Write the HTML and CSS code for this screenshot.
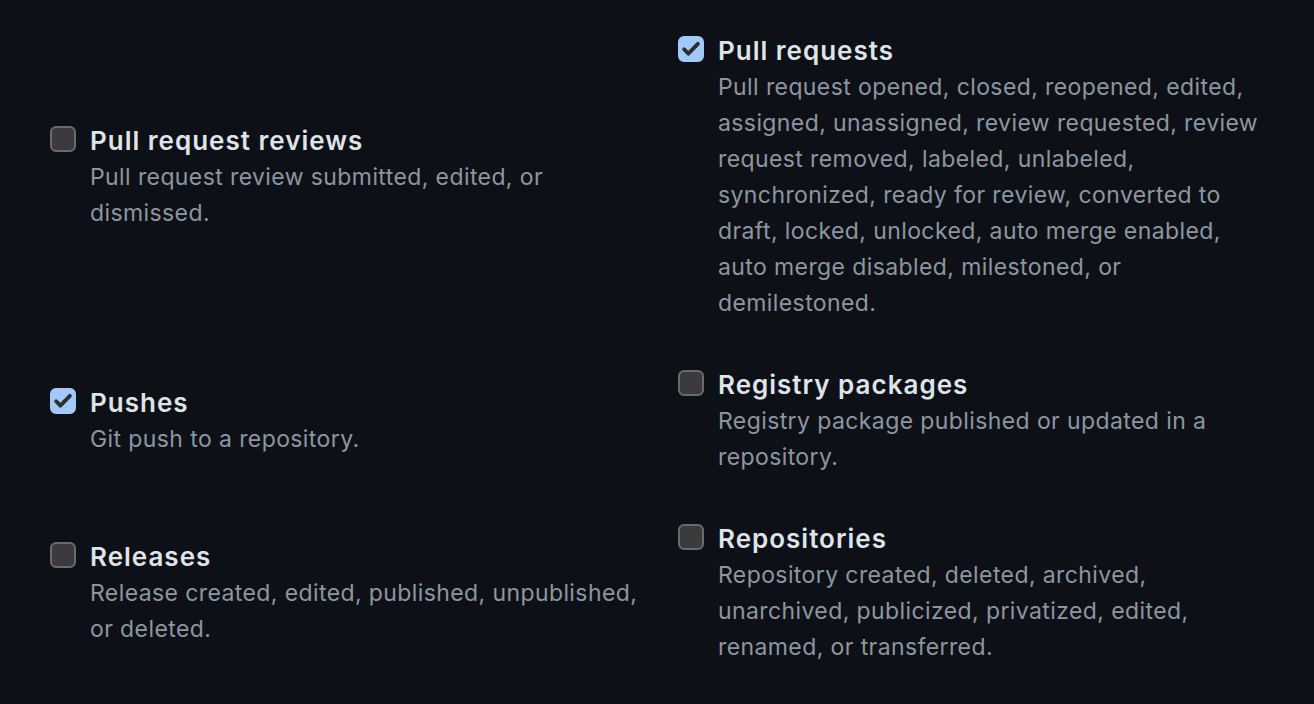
FILE: index.html
```html
<!DOCTYPE html>
<html lang="en">
<head>
  <meta charset="UTF-8" />
  <title>Webhook events</title>
  <link rel="stylesheet" href="styles.css">
</head>
<body>
  <div class="events">

    <!-- Row 1 -->
    <label class="event">
      <span class="box"></span>
      <span class="event-text">
        <span class="event-title">Pull request reviews</span>
        <span class="event-note">Pull request review submitted, edited, or dismissed.</span>
      </span>
    </label>

    <label class="event">
      <span class="box checked">
        <svg viewBox="0 0 16 16" width="22" height="22"><path d="M3 8.2l3.1 3.2L13 4.3" fill="none" stroke="#2e2e30" stroke-width="2.8" stroke-linecap="round" stroke-linejoin="round"/></svg>
      </span>
      <span class="event-text">
        <span class="event-title">Pull requests</span>
        <span class="event-note">Pull request opened, closed, reopened, edited, assigned, unassigned, review requested, review request removed, labeled, unlabeled, synchronized, ready for review, converted to draft, locked, unlocked, auto merge enabled, auto merge disabled, milestoned, or demilestoned.</span>
      </span>
    </label>

    <!-- Row 2 -->
    <label class="event">
      <span class="box checked">
        <svg viewBox="0 0 16 16" width="22" height="22"><path d="M3 8.2l3.1 3.2L13 4.3" fill="none" stroke="#2e2e30" stroke-width="2.8" stroke-linecap="round" stroke-linejoin="round"/></svg>
      </span>
      <span class="event-text">
        <span class="event-title">Pushes</span>
        <span class="event-note">Git push to a repository.</span>
      </span>
    </label>

    <label class="event">
      <span class="box"></span>
      <span class="event-text">
        <span class="event-title">Registry packages</span>
        <span class="event-note">Registry package published or updated in a repository.</span>
      </span>
    </label>

    <!-- Row 3 -->
    <label class="event">
      <span class="box"></span>
      <span class="event-text">
        <span class="event-title">Releases</span>
        <span class="event-note">Release created, edited, published, unpublished, or deleted.</span>
      </span>
    </label>

    <label class="event">
      <span class="box"></span>
      <span class="event-text">
        <span class="event-title">Repositories</span>
        <span class="event-note">Repository created, deleted, archived, unarchived, publicized, privatized, edited, renamed, or transferred.</span>
      </span>
    </label>

  </div>
</body>
</html>
```

FILE: styles.css
```css
:root {
  --bg: #0d1117;
  --title: #dfe4e9;
  --note: #8d96a0;
  --box-fill: #3b3b3d;
  --box-border: #6a6a6e;
  --box-checked: #a3c9f9;
}

html, body {
  margin: 0;
  background-color: var(--bg);
}

body {
  font-family: Inter, "Noto Sans", sans-serif;
  -webkit-font-smoothing: antialiased;
}

.events {
  display: grid;
  grid-template-columns: 604px 604px;
  column-gap: 24px;
  row-gap: 45px;
  align-items: center;
  padding: 32px 0 0 50px;
}

.event {
  display: flex;
  gap: 14px;
  align-items: flex-start;
  cursor: pointer;
}

.box {
  flex: none;
  box-sizing: border-box;
  width: 26px;
  height: 26px;
  margin-top: 4px;
  border: 2px solid var(--box-border);
  border-radius: 6px;
  background-color: var(--box-fill);
  display: flex;
  align-items: center;
  justify-content: center;
}

.box.checked {
  background-color: var(--box-checked);
  border-color: var(--box-checked);
}

.event-text {
  display: flex;
  flex-direction: column;
  max-width: 554px;
}

.event-title {
  color: var(--title);
  font-size: 26px;
  font-weight: 600;
  letter-spacing: 1px;
  line-height: 36px;
  padding-top: 1px;
}

.event-note {
  color: var(--note);
  font-size: 23px;
  letter-spacing: 0.4px;
  line-height: 36px;
}
```
